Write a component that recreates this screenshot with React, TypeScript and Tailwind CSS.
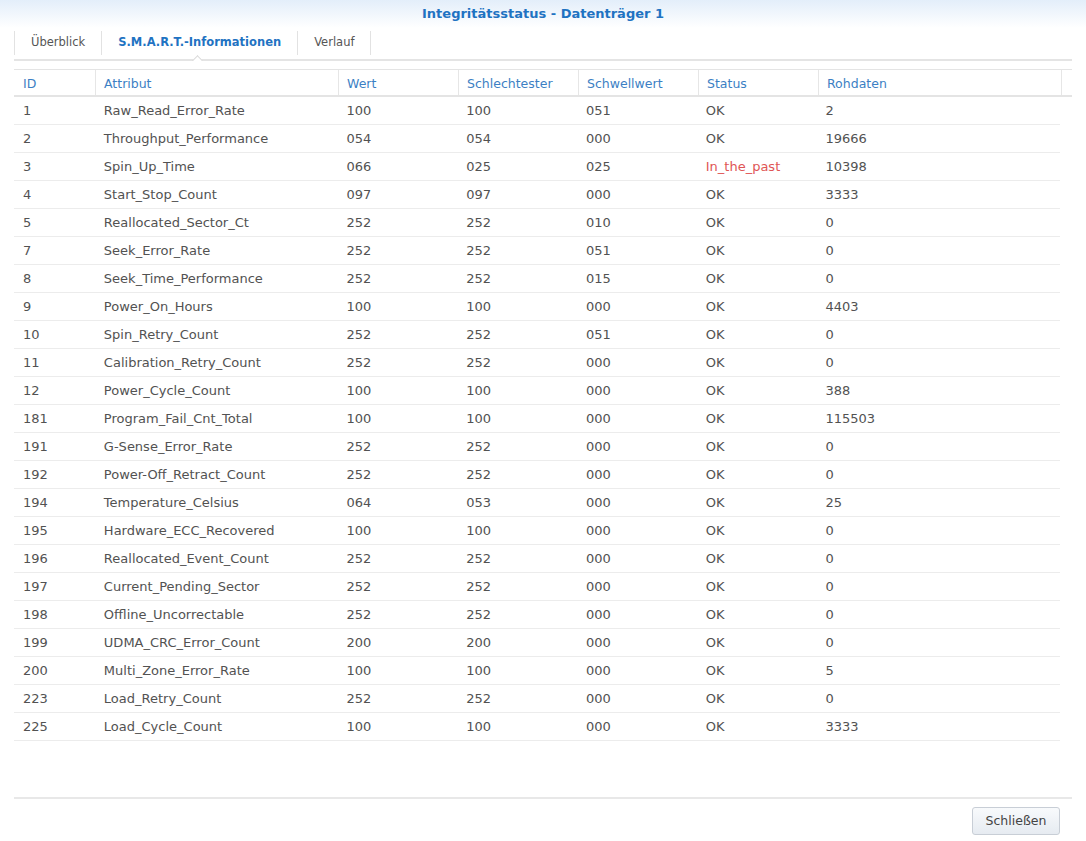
import React from "react";

const rows: [string, string, string, string, string, string, string][] = [
  ["1", "Raw_Read_Error_Rate", "100", "100", "051", "OK", "2"],
  ["2", "Throughput_Performance", "054", "054", "000", "OK", "19666"],
  ["3", "Spin_Up_Time", "066", "025", "025", "In_the_past", "10398"],
  ["4", "Start_Stop_Count", "097", "097", "000", "OK", "3333"],
  ["5", "Reallocated_Sector_Ct", "252", "252", "010", "OK", "0"],
  ["7", "Seek_Error_Rate", "252", "252", "051", "OK", "0"],
  ["8", "Seek_Time_Performance", "252", "252", "015", "OK", "0"],
  ["9", "Power_On_Hours", "100", "100", "000", "OK", "4403"],
  ["10", "Spin_Retry_Count", "252", "252", "051", "OK", "0"],
  ["11", "Calibration_Retry_Count", "252", "252", "000", "OK", "0"],
  ["12", "Power_Cycle_Count", "100", "100", "000", "OK", "388"],
  ["181", "Program_Fail_Cnt_Total", "100", "100", "000", "OK", "115503"],
  ["191", "G-Sense_Error_Rate", "252", "252", "000", "OK", "0"],
  ["192", "Power-Off_Retract_Count", "252", "252", "000", "OK", "0"],
  ["194", "Temperature_Celsius", "064", "053", "000", "OK", "25"],
  ["195", "Hardware_ECC_Recovered", "100", "100", "000", "OK", "0"],
  ["196", "Reallocated_Event_Count", "252", "252", "000", "OK", "0"],
  ["197", "Current_Pending_Sector", "252", "252", "000", "OK", "0"],
  ["198", "Offline_Uncorrectable", "252", "252", "000", "OK", "0"],
  ["199", "UDMA_CRC_Error_Count", "200", "200", "000", "OK", "0"],
  ["200", "Multi_Zone_Error_Rate", "100", "100", "000", "OK", "5"],
  ["223", "Load_Retry_Count", "252", "252", "000", "OK", "0"],
  ["225", "Load_Cycle_Count", "100", "100", "000", "OK", "3333"],
];

const headers = ["ID", "Attribut", "Wert", "Schlechtester", "Schwellwert", "Status", "Rohdaten"];
const widths = ["w-[82px]", "w-[243px]", "w-[120px]", "w-[120px]", "w-[120px]", "w-[120px]", "w-[243px]"];

export default function App() {
  return (
    <div
      className="w-[1086px] h-[841px] bg-white flex flex-col text-[13px] text-[#525252]"
      style={{ fontFamily: '"DejaVu Sans", Verdana, sans-serif' }}
    >
      {/* title bar */}
      <div className="h-[28px] bg-gradient-to-b from-[#e3eefa] to-white flex items-center justify-center">
        <span className="text-[13px] font-bold text-[#1f73c2]">
          Integritätsstatus - Datenträger 1
        </span>
      </div>

      {/* tabs */}
      <div className="mx-[14px] w-[1058px] h-[33px] border-b-2 border-[#e4e4e4] flex items-center relative text-[11.5px] pb-[1px]">
        <div className="h-[24px] border-l border-[#e2e2e2]" />
        <div className="px-[16px] text-[#555]">Überblick</div>
        <div className="h-[24px] border-l border-[#e2e2e2]" />
        <div className="px-[16px] font-bold text-[#1f73c2]">S.M.A.R.T.-Informationen</div>
        <div className="h-[24px] border-l border-[#e2e2e2]" />
        <div className="px-[16px] text-[#555]">Verlauf</div>
        <div className="h-[24px] border-l border-[#e2e2e2]" />
        <div className="absolute left-[177px] bottom-[-2px] w-[12px] h-[6px] overflow-hidden">
          <div className="w-[9px] h-[9px] bg-white border-l border-t border-[#d8d8d8] rotate-45 mx-auto mt-[2px]" />
        </div>
      </div>

      {/* table */}
      <div className="mx-[14px] mt-[8px] w-[1058px]">
        <div className="flex h-[28px] border-t border-b-2 border-[#e4e4e4] text-[#3c7fc4] text-[12.5px]">
          {headers.map((h, i) => (
            <div
              key={h}
              className={`${widths[i]} h-full flex items-center pt-[3px] pl-[8px] border-r border-[#e6e6e6] ${i === 0 ? "pl-[9px]" : ""}`}
            >
              {h}
            </div>
          ))}
          <div className="flex-1" />
        </div>
        <div className="w-[1046px]">
          {rows.map((r) => (
            <div key={r[0]} className="flex h-[28px] items-center border-b border-[#ececec]">
              {r.map((c, i) => (
                <div
                  key={i}
                  className={`${widths[i]} pl-[8px] ${i === 0 ? "pl-[9px]" : ""} ${
                    c === "In_the_past" ? "text-[#e05555]" : ""
                  }`}
                >
                  {c}
                </div>
              ))}
            </div>
          ))}
        </div>
      </div>

      <div className="flex-1" />

      {/* footer */}
      <div className="mx-[14px] w-[1058px] border-t-2 border-[#e8e8e8] flex justify-end pt-[8px] pb-[6px] pr-[12px]">
        <button className="w-[88px] h-[28px] rounded-[3px] border border-[#c8ced6] bg-gradient-to-b from-[#f8fafc] to-[#e6ebf1] text-[#444] text-[12.5px]">
          Schließen
        </button>
      </div>
    </div>
  );
}
